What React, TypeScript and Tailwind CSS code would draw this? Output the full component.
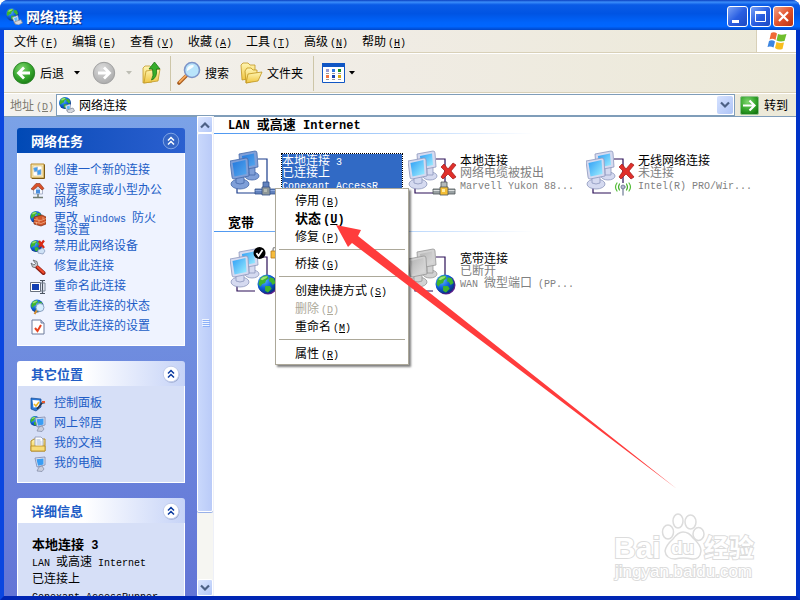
import type { ReactNode } from "react";

// ASCII runs are set in a half-width mono face beside the full-width characters
function Mix({ text, bold }: { text: string; bold?: boolean }) {
  return (
    <>
      {text.split(/([\x20-\x7e]+)/).map((part, i) =>
        i % 2 ? (
          <span
            key={i}
            className={`font-['Liberation_Mono',monospace] leading-0 whitespace-pre-wrap ${bold ? "text-[12px]" : "text-[10px]"}`}
          >
            {part}
          </span>
        ) : (
          part
        )
      )}
    </>
  );
}

function Hotkey({ text, letter, bold }: { text: string; letter: string; bold?: boolean }) {
  return (
    <>
      {text}
      <span
        className={`ml-0.5 font-['Liberation_Mono',monospace] leading-0 ${bold ? "text-[12px]" : "text-[10px]"}`}
      >
        (<u>{letter}</u>)
      </span>
    </>
  );
}

/* ---------- shared drawings ---------- */

function Defs() {
  return (
    <svg className="absolute h-0 w-0" aria-hidden="true">
      <defs>
        <radialGradient id="globe" cx="0.35" cy="0.3" r="0.8">
          <stop offset="0" stopColor="#5fb4ff" />
          <stop offset="0.5" stopColor="#0d62dc" />
          <stop offset="1" stopColor="#06256f" />
        </radialGradient>
        <linearGradient id="screen" x1="0" y1="0" x2="1" y2="1">
          <stop offset="0" stopColor="#2f9ef5" />
          <stop offset="1" stopColor="#9ff0ff" />
        </linearGradient>
        <linearGradient id="screenOn" x1="0" y1="0" x2="1" y2="1">
          <stop offset="0" stopColor="#2478dc" />
          <stop offset="1" stopColor="#55a8ee" />
        </linearGradient>
        <linearGradient id="screenOff" x1="0" y1="0" x2="1" y2="1">
          <stop offset="0" stopColor="#b4b4b4" />
          <stop offset="1" stopColor="#dedede" />
        </linearGradient>
        <linearGradient id="folder" x1="0" y1="0" x2="0" y2="1">
          <stop offset="0" stopColor="#fff6b4" />
          <stop offset="1" stopColor="#f0c540" />
        </linearGradient>
        <radialGradient id="green" cx="0.4" cy="0.3" r="0.75">
          <stop offset="0" stopColor="#7fd66f" />
          <stop offset="0.6" stopColor="#35a52c" />
          <stop offset="1" stopColor="#177a12" />
        </radialGradient>
        <radialGradient id="grey" cx="0.4" cy="0.3" r="0.75">
          <stop offset="0" stopColor="#dcdcdc" />
          <stop offset="1" stopColor="#a9a9a9" />
        </radialGradient>
      </defs>
    </svg>
  );
}

function Globe({ cx, cy, r }: { cx: number; cy: number; r: number }) {
  return (
    <g transform={`translate(${cx} ${cy}) scale(${r / 10})`}>
      <circle r="10" fill="url(#globe)" />
      <path
        d="M-8-4Q-6-9 0-9L2-6-1-4-2-1-5 0-7 3-9 0ZM3-7L7-6 9-1 6 1 4-2 2-3ZM-2 2L3 2 5 5 1 9-2 7Z"
        fill="#3fb52d"
      />
      <path d="M-7-5Q-4-9 1-8L-1-6-5-4Z" fill="#b4ec8a" opacity="0.8" />
    </g>
  );
}

type Tone = "normal" | "on" | "off";
const TONES = {
  normal: { edge: "#8d97bd", body: "#d5daf0", screen: "url(#screen)", wire: "#2b0f57" },
  on: { edge: "#4467a8", body: "#7f9fd8", screen: "url(#screenOn)", wire: "#1a3c8c" },
  off: { edge: "#969696", body: "#d2d2d2", screen: "url(#screenOff)", wire: "#2b0f57" },
};

function Computers({ tone }: { tone: Tone }) {
  const t = TONES[tone];
  return (
    <g>
      <path d="M28 10H37V34M7 37V44H25" fill="none" stroke={t.wire} strokeWidth="1.2" />
      <g stroke={t.edge} strokeWidth="0.8">
        <ellipse cx="22" cy="27" rx="7" ry="4" fill={t.body} />
        <path d="M19 18h6v8h-6z" fill={t.body} />
        <path d="M9 5L25 2Q27 2 27 4L28 18 12 21Q10 21 10 19Z" fill={t.body} />
        <path d="M12 7L24 4.500 25 16 13 18.500Z" fill={t.screen} stroke="none" />
        <ellipse cx="10" cy="35" rx="9" ry="5" fill={t.body} />
        <path d="M6 26h8v8q-4 2-8 0z" fill={t.body} />
        <path d="M0 12L16 9Q18 9 18 11L19 27 4 30Q2 30 2 28Z" fill={t.body} />
        <path d="M2.500 14L15.500 11 16.500 25 4.500 27.500Z" fill={t.screen} stroke="none" />
      </g>
    </g>
  );
}

function Plug({ tone }: { tone: Tone }) {
  const on = tone === "on";
  return (
    <g stroke={on ? "#34528c" : "#4e5658"} strokeWidth="0.8">
      <path d="M33 33h6v7h-6z" fill={on ? "#6282bd" : "#b4babb"} />
      <path d="M25 40h22v5H25z" fill={on ? "#6282bd" : "#98a0a2"} />
      <path d="M25.500 41.500h21" stroke={on ? "#9cb6e4" : "#eceeee"} />
      <path d="M32 38h8v8h-8z" fill={on ? "#8e9798" : "#f3bd35"} />
      <path d="M34 40h3v3h-3z" fill={on ? "#b6bcb4" : "#ffeb9e"} stroke="none" />
    </g>
  );
}

function Cross() {
  return (
    <path
      d="M33 18L36 15 40 20 45 14 48 16 43 22 48 28 45 30 40 25 35 30 33 28 37 22Z"
      fill="#e0302b"
      stroke="#9c1717"
      strokeWidth="0.7"
    />
  );
}

function Antenna() {
  return (
    <g fill="none" strokeLinecap="round">
      <path d="M37 39V46" stroke="#929bb0" strokeWidth="1.600" />
      <circle cx="37" cy="38" r="2" fill="#b5bbcf" stroke="#7a819e" />
      <path d="M33.500 35q-2 3 0 6M40.500 35q2 3 0 6" stroke="#48b22f" strokeWidth="1.200" />
      <path d="M31 34q-3 4 0 8M43 34q3 4 0 8" stroke="#55bd39" strokeWidth="1.200" />
    </g>
  );
}

type Kind = "lan" | "unplugged" | "wireless" | "default-dial" | "dial";

function ConnectionIcon({ kind }: { kind: Kind }) {
  const tone: Tone = kind === "lan" ? "on" : kind === "dial" ? "off" : "normal";
  return (
    <svg viewBox="0 0 50 48" className="h-12 w-[50px] shrink-0" aria-hidden="true">
      <Computers tone={tone} />
      {(kind === "lan" || kind === "unplugged") && <Plug tone={tone} />}
      {(kind === "unplugged" || kind === "wireless") && <Cross />}
      {kind === "wireless" && <Antenna />}
      {(kind === "dial" || kind === "default-dial") && (
        <>
          <circle cx="38" cy="38" r="9.500" fill="#5a1f8c" />
          <Globe cx={37} cy={37} r={9.5} />
        </>
      )}
      {kind === "default-dial" && (
        <>
          <path d="M43 6V3q0-3 3-3t3 3V6" fill="none" stroke="#9b9b9b" strokeWidth="1.500" />
          <path d="M41 4h9v7h-9z" fill="#f6bc3c" stroke="#b7791b" strokeWidth="0.8" />
          <circle cx="29.500" cy="6" r="6" fill="#000" />
          <path d="M26.500 6l2 3 4-6" fill="none" stroke="#fff" strokeWidth="1.800" />
        </>
      )}
    </svg>
  );
}

function NetworkIcon({ className = "h-4 w-4" }: { className?: string }) {
  return (
    <svg viewBox="0 0 16 16" className={className} aria-hidden="true">
      <Globe cx={6} cy={6} r={6} />
      <path d="M6 9l5-2 1 5-4 2z" fill="#e9edf8" stroke="#8d97b0" strokeWidth="0.6" />
      <path d="M7.500 9.500l3-1 .5 3-2.500 1z" fill="#5cb9f7" />
      <path d="M8 13l6-2 1.500 3-4 2-3-1z" fill="#d3d7df" stroke="#7f8794" strokeWidth="0.7" />
    </svg>
  );
}

function Flag() {
  return (
    <svg viewBox="0 0 20 18" className="h-[18px] w-5" aria-hidden="true">
      <path d="M4 1Q7-.5 10 1.500L8.500 8Q5.500 6 2.500 7.500Z" fill="#ef6a35" />
      <path d="M11 2Q14 3.500 19.500 2L17.500 9Q13 10 9.500 8.500Z" fill="#6fbe2d" />
      <path d="M2 9Q5 7.500 8 9.500L6.500 15.500Q3.500 14 .5 15Z" fill="#3c85e0" />
      <path d="M9.500 10Q13 11.500 17 10.500L15.500 17Q11 18.500 8 16Z" fill="#f8bd1d" />
    </svg>
  );
}

function Chevrons({ primary }: { primary?: boolean }) {
  return (
    <svg viewBox="0 0 18 18" className="h-[18px] w-[18px]" aria-hidden="true">
      {!primary && <circle cx="9.500" cy="9.800" r="8" fill="#9aa8cf" />}
      <circle
        cx="9"
        cy="9"
        r="7.800"
        fill={primary ? "#3566c6" : "#fff"}
        stroke={primary ? "#7fa3e4" : "#c2cdec"}
      />
      <path
        d="M6 8.500L9 5.500 12 8.500M6 12.500L9 9.500 12 12.500"
        fill="none"
        stroke={primary ? "#fff" : "#0c3ba0"}
        strokeWidth="1.500"
      />
    </svg>
  );
}

/* ---------- task icons ---------- */

const pc = (
  <>
    <path d="M5 2l10-1v8l-8 2z" fill="#dfe4f2" stroke="#7b87ac" strokeWidth="0.8" />
    <path d="M6.500 3.300l7-.8v6l-5.500 1.300z" fill="#3a9df4" />
    <path d="M9 11l3-1 2 3-2 2.500-5-.5z" fill="#c9cede" stroke="#8088a4" strokeWidth="0.7" />
  </>
);

const ICONS: Record<string, ReactNode> = {
  create: (
    <>
      <path d="M1 1h13v14H1z" fill="#f6e4ac" stroke="#b98a2c" />
      <path d="M14.500 1.500V15.500H2" fill="none" stroke="#7c5a14" />
      <path d="M3 3h9v10H3z" fill="#fff" stroke="#dfc37c" strokeWidth="0.6" />
      <path d="M3.500 5l4-1v4l-3 1zM7 7.500l4-1v5l-3.500.5z" fill="#429fee" stroke="#9eaecc" strokeWidth="0.6" />
    </>
  ),
  home: (
    <>
      <path d="M3.500 5h9v6h-9z" fill="#f5f6fb" stroke="#8f99b4" strokeWidth="0.7" />
      <path d="M1 6L6 .5h4L14 5.500 12 7 8 3 3.500 7z" fill="#d9512b" stroke="#8c3015" strokeWidth="0.6" />
      <path d="M6 6.500h4v4H6z" fill="#4a8fe0" />
      <path d="M8 11v3M3 14.500h10" stroke="#6f7b72" strokeWidth="1.500" />
    </>
  ),
  firewall: (
    <>
      <Globe cx={6} cy={6} r={6} />
      <path d="M4 6l8-2 4 2v7l-5 2-7-2z" fill="#d0562a" stroke="#7b2a10" strokeWidth="0.7" />
      <path d="M4 8.500l7 1 5-2M4 11l7 1.500 5-2M7 6.500v2M9 9v2.500M13 6v2M6.500 11v2.500" stroke="#f4b694" strokeWidth="0.7" fill="none" />
    </>
  ),
  disable: (
    <>
      <Globe cx={6} cy={7} r={6} />
      <path d="M9 2l5 7M14 1.500L9 8" stroke="#d92a14" strokeWidth="2.200" />
      <path d="M8 11l5-2 2 3-2 3-5-1z" fill="#cfe2f6" stroke="#7e92b4" strokeWidth="0.7" />
    </>
  ),
  repair: (
    <>
      <path d="M3 1l4 1.500 1 5L6.500 9l-4-1L1 4l3 2 1.500-1.500z" fill="#c5c9cc" stroke="#5e6468" strokeWidth="0.8" />
      <path d="M7.500 8.500l6 5.500" stroke="#8c1b10" strokeWidth="4" strokeLinecap="round" />
      <path d="M7.500 8l6 5.500" stroke="#ef4c2e" strokeWidth="2.200" strokeLinecap="round" />
    </>
  ),
  rename: (
    <>
      <path d="M.5 3.500h10v9H.5z" fill="#fff" stroke="#68707e" />
      <path d="M2 5h7v6H2z" fill="#123fb3" />
      <path d="M10 1.500h5M12.500 1.500v13M10 14.500h5" stroke="#4b5462" strokeWidth="1.200" />
      <path d="M11 4h4v8h-4" fill="none" stroke="#7a8493" />
    </>
  ),
  status: (
    <>
      <Globe cx={7} cy={7} r={6.5} />
      <path d="M7 11l-2.500 4" stroke="#d08a30" strokeWidth="2" />
      <circle cx="10" cy="8.500" r="4" fill="#d8efff" stroke="#8ba2c2" />
    </>
  ),
  settings: (
    <>
      <path d="M2 1h9l3 3v11H2z" fill="#fff" stroke="#6d7a9b" />
      <path d="M11 1v3h3" fill="#c6d2ec" stroke="#6d7a9b" />
      <path d="M5 9l2.500 3L11 6" fill="none" stroke="#e8441f" strokeWidth="2" />
    </>
  ),
  control: (
    <>
      <path d="M1 2l10 1v8l-5 4-5-2z" fill="#2c79d8" stroke="#154a94" strokeWidth="0.7" />
      <path d="M2.500 4l7 .5v6.500l-6 .5z" fill="#fff" />
      <path d="M4 8l2 2 3-4" fill="none" stroke="#efb51e" strokeWidth="1.500" />
      <path d="M7 13l5-6 3-.5" stroke="#2b3444" strokeWidth="1.700" fill="none" />
      <path d="M12 6h3" stroke="#e5572c" strokeWidth="2" />
    </>
  ),
  places: (
    <>
      <Globe cx={5} cy={5} r={5} />
      {pc}
    </>
  ),
  documents: (
    <>
      <path d="M1 5l3-2h11v12H1z" fill="url(#folder)" stroke="#b48a23" />
      <path d="M5 1h6l2 2v8H5z" fill="#fff" stroke="#8a96b5" strokeWidth="0.8" />
      <path d="M6.500 4h4M6.500 6h5M6.500 8h5" stroke="#8fa5cf" strokeWidth="0.8" />
      <path d="M1 10h14v5H1z" fill="#f8dc77" stroke="#b48a23" strokeWidth="0.8" />
    </>
  ),
  computer: pc,
};

type Link = { icon: string; label: string };

const TASKS: Link[] = [
  { icon: "create", label: "创建一个新的连接" },
  { icon: "home", label: "设置家庭或小型办公网络" },
  { icon: "firewall", label: "更改 Windows 防火墙设置" },
  { icon: "disable", label: "禁用此网络设备" },
  { icon: "repair", label: "修复此连接" },
  { icon: "rename", label: "重命名此连接" },
  { icon: "status", label: "查看此连接的状态" },
  { icon: "settings", label: "更改此连接的设置" },
];

const PLACES: Link[] = [
  { icon: "control", label: "控制面板" },
  { icon: "places", label: "网上邻居" },
  { icon: "documents", label: "我的文档" },
  { icon: "computer", label: "我的电脑" },
];

const MENUS = [
  ["文件", "F"],
  ["编辑", "E"],
  ["查看", "V"],
  ["收藏", "A"],
  ["工具", "T"],
  ["高级", "N"],
  ["帮助", "H"],
];

type Connection = { kind: Kind; name: string; state: string; device: string; selected?: boolean };

const GROUPS: { title: string; items: Connection[] }[] = [
  {
    title: "LAN 或高速 Internet",
    items: [
      { kind: "lan", name: "本地连接 3", state: "已连接上", device: "Conexant AccessR", selected: true },
      { kind: "unplugged", name: "本地连接", state: "网络电缆被拔出", device: "Marvell Yukon 88..." },
      { kind: "wireless", name: "无线网络连接", state: "未连接", device: "Intel(R) PRO/Wir..." },
    ],
  },
  {
    title: "宽带",
    items: [
      { kind: "default-dial", name: "", state: "", device: "" },
      { kind: "dial", name: "宽带连接", state: "已断开", device: "WAN 微型端口 (PP..." },
    ],
  },
];

type Entry = { text: string; letter: string; bold?: boolean; disabled?: boolean };

const CONTEXT: Entry[][] = [
  [
    { text: "停用", letter: "B" },
    { text: "状态", letter: "U", bold: true },
    { text: "修复", letter: "P" },
  ],
  [{ text: "桥接", letter: "G" }],
  [
    { text: "创建快捷方式", letter: "S" },
    { text: "删除", letter: "D", disabled: true },
    { text: "重命名", letter: "M" },
  ],
  [{ text: "属性", letter: "R" }],
];

/* ---------- window chrome ---------- */

function TitleBar() {
  const button =
    "flex h-[21px] w-[21px] items-center justify-center rounded-[3px] border border-white";
  return (
    <header className="flex h-[30px] shrink-0 items-center bg-[linear-gradient(180deg,#0a3fc0_0%,#3b8dfa_7%,#0a5be6_16%,#0054e3_45%,#0064fb_75%,#0066ff_88%,#0046c8_100%)] pt-0.5 pr-1.5 pl-1.5">
      <NetworkIcon className="h-[17px] w-[17px]" />
      <h1 className="ml-[3px] flex-1 text-[14px] leading-4 font-bold text-white [text-shadow:1px_1px_1px_#0a2a80]">
        网络连接
      </h1>
      <div className="flex gap-0.5">
        <button aria-label="最小化" className={`${button} bg-linear-to-br from-[#7ba1f5] via-[#2a5fe2] to-[#1c48c2]`}>
          <svg viewBox="0 0 19 19" className="h-[19px] w-[19px]">
            <path d="M4 13h7v3H4z" fill="#fff" />
          </svg>
        </button>
        <button aria-label="最大化" className={`${button} bg-linear-to-br from-[#7ba1f5] via-[#2a5fe2] to-[#1c48c2]`}>
          <svg viewBox="0 0 19 19" className="h-[19px] w-[19px]">
            <path d="M4.500 5v9.500h10V5" fill="none" stroke="#fff" />
            <path d="M4 4h11v3H4z" fill="#fff" />
          </svg>
        </button>
        <button aria-label="关闭" className={`${button} bg-linear-to-br from-[#f0a084] via-[#e2522b] to-[#b83212]`}>
          <svg viewBox="0 0 19 19" className="h-[19px] w-[19px]">
            <path d="M5 5l9 9M14 5l-9 9" stroke="#fff" strokeWidth="2.200" />
          </svg>
        </button>
      </div>
    </header>
  );
}

function MenuBar() {
  return (
    <div className="flex h-[23px] shrink-0 border-b border-[#d8d0b8]">
      <nav className="flex flex-1 items-center pl-0.5">
        {MENUS.map(([text, letter]) => (
          <button key={letter} className="w-[58px] px-2 text-left leading-4 whitespace-nowrap">
            <Hotkey text={text} letter={letter} />
          </button>
        ))}
      </nav>
      <div className="flex w-10 items-center justify-center border-l border-[#d8d0b8] bg-white">
        <Flag />
      </div>
    </div>
  );
}

function Caret({ faded }: { faded?: boolean }) {
  return (
    <svg viewBox="0 0 6 4" className="h-1 w-1.5">
      <path d="M0 0h6L3 3.500z" fill={faded ? "#bdbdb4" : "#000"} />
    </svg>
  );
}

function Toolbar() {
  return (
    <div className="flex h-10 shrink-0 items-center border-t border-b border-t-white border-b-[#d8d0b8] pl-2">
      <button className="flex items-center gap-1">
        <svg viewBox="0 0 24 24" className="h-6 w-6">
          <circle cx="12" cy="12" r="10.700" fill="url(#green)" stroke="#2c8428" />
          <path d="M18 12H8M12 6.500L6.500 12 12 17.500" fill="none" stroke="#fff" strokeWidth="2.800" />
        </svg>
        后退
      </button>
      <button aria-label="后退历史" className="ml-2.5">
        <Caret />
      </button>
      <button aria-label="前进" className="ml-3">
        <svg viewBox="0 0 24 24" className="h-6 w-6">
          <circle cx="12" cy="12" r="10.700" fill="url(#grey)" stroke="#a0a0a0" />
          <path d="M6 12H16M12 6.500L17.500 12 12 17.500" fill="none" stroke="#fff" strokeWidth="2.800" />
        </svg>
      </button>
      <button aria-label="前进历史" className="ml-2.5">
        <Caret faded />
      </button>
      <button aria-label="向上" className="ml-2.5">
        <svg viewBox="0 0 20 24" className="h-6 w-5">
          <path d="M1 7l2-2h5l2 2v14l-9 1z" fill="url(#folder)" stroke="#c29b2b" strokeWidth="0.8" />
          <path d="M4 10l14-2-2 12-14 2z" fill="url(#folder)" stroke="#c29b2b" strokeWidth="0.8" />
          <path d="M12.500 1L18 8h-3.500q1 9-5 11 2.500-4 1-11H7z" fill="#37ad2b" stroke="#1d7717" strokeWidth="0.8" />
        </svg>
      </button>
      <span className="ml-2 h-[35px] w-px bg-[#cdc6a8]" />
      <button className="ml-1.5 flex items-center gap-1">
        <svg viewBox="0 0 24 24" className="h-6 w-6">
          <path d="M2 22l8-8" stroke="#a75a1b" strokeWidth="3.600" strokeLinecap="round" />
          <path d="M2.500 21l7-7" stroke="#f5a95c" strokeWidth="1.800" strokeLinecap="round" />
          <circle cx="15" cy="9" r="7.500" fill="#b9e4fb" stroke="#7d95c9" strokeWidth="1.600" />
          <path d="M10 8q1-4 6-4 2 1-1 3t-5 3z" fill="#fff" opacity="0.9" />
        </svg>
        搜索
      </button>
      <button className="ml-2.5 flex items-center gap-1">
        <svg viewBox="0 0 24 22" className="h-[22px] w-6">
          <path d="M2 3l2-2h5l2 2h5v11l-2 2-11 2z" fill="url(#folder)" stroke="#c09520" strokeWidth="0.8" />
          <path d="M6 9l2-3h4l2 2h4v10l-11 3z" fill="url(#folder)" stroke="#c09520" strokeWidth="0.8" />
          <path d="M9 12l14-2-4 9-12 2z" fill="url(#folder)" stroke="#c09520" strokeWidth="0.8" />
        </svg>
        文件夹
      </button>
      <span className="ml-2.5 h-[35px] w-px bg-[#cdc6a8]" />
      <button aria-label="查看" className="ml-2 flex items-center gap-1">
        <svg viewBox="0 0 23 20" className="h-5 w-[23px]">
          <path d="M.5.500h22v19H.5z" fill="#fff" stroke="#1056c4" />
          <path d="M0 0h23v4H0z" fill="#1056c4" />
          <path d="M4 6h3v3H4z" fill="#9b9bd2" />
          <path d="M10 6h3v3h-3z" fill="#2d78e2" />
          <path d="M16 6h3v3h-3z" fill="#189029" />
          <path d="M4 12h3v3H4z" fill="#f27542" />
          <path d="M10 12h3v3h-3z" fill="#1642ae" />
          <path d="M16 12h3v3h-3z" fill="#d9a80a" />
          <path d="M4 10.500h3M10 10.500h3M16 10.500h3M4 16.500h3M10 16.500h3M16 16.500h3" stroke="#9a9a9a" />
        </svg>
        <Caret />
      </button>
    </div>
  );
}

function AddressBar() {
  return (
    <form className="flex h-[23px] shrink-0 items-center border-t border-white" onSubmit={(e) => e.preventDefault()}>
      <label htmlFor="address" className="w-[52px] pl-1.5 whitespace-nowrap text-[#7d7b70]">
        <Hotkey text="地址" letter="D" />
      </label>
      <div className="flex h-[22px] flex-1 items-center border border-[#7f9db9] bg-white pr-px pl-0.5">
        <NetworkIcon className="h-4 w-4" />
        <input id="address" defaultValue="网络连接" className="ml-1 min-w-0 flex-1 outline-none" />
        <button
          type="button"
          aria-label="地址列表"
          className="flex h-[18px] w-4 items-center justify-center rounded-xs bg-linear-to-br from-[#d6e2ff] to-[#aec4f6]"
        >
          <svg viewBox="0 0 10 8" className="h-2 w-2.5">
            <path d="M1 1.500l4 4 4-4" fill="none" stroke="#4d6185" strokeWidth="2.200" />
          </svg>
        </button>
      </div>
      <button className="ml-[5px] flex w-[56px] items-center gap-[5px] whitespace-nowrap">
        <svg viewBox="0 0 19 19" className="h-[19px] w-[19px]">
          <rect x="0.500" y="0.500" width="18" height="18" rx="1.500" fill="url(#green)" stroke="#8fc28d" />
          <path d="M3 9.500h11M9.500 4.500l5 5-5 5" fill="none" stroke="#fff" strokeWidth="2.200" />
        </svg>
        转到
      </button>
    </form>
  );
}

/* ---------- sidebar ---------- */

function Panel({ title, primary, children }: { title: string; primary?: boolean; children: ReactNode }) {
  return (
    <section className="shrink-0">
      <h2
        className={`flex h-[25px] items-center justify-between rounded-t-[3px] pr-[5px] pl-3.5 text-[13px] font-bold ${
          primary
            ? "bg-linear-to-r from-[#0049b5] to-[#2b60d0] text-white"
            : "bg-linear-to-r from-white from-40% to-[#c6d3f7] text-[#215dc6]"
        }`}
      >
        {title}
        <button aria-label={`收起${title}`}>
          <Chevrons primary={primary} />
        </button>
      </h2>
      <div className={`border border-t-0 border-white ${primary ? "bg-[#eff3ff]" : "bg-[#d6dff7]"}`}>
        {children}
      </div>
    </section>
  );
}

function LinkList({ links }: { links: Link[] }) {
  return (
    <ul className="pt-1.5 pr-5 pb-2.5 pl-3">
      {links.map((link) => (
        <li key={link.label}>
          <a href="#" className="flex min-h-5 gap-2 pt-1 leading-3 text-[#215dc6]">
            <svg viewBox="0 0 16 16" className="h-4 w-4 shrink-0" aria-hidden="true">
              {ICONS[link.icon]}
            </svg>
            <span>
              <Mix text={link.label} />
            </span>
          </a>
        </li>
      ))}
    </ul>
  );
}

function Sidebar() {
  return (
    <aside className="flex w-[193px] shrink-0 flex-col gap-[15px] overflow-hidden border-t border-[#7f9db9] bg-linear-to-b from-[#7ba2e7] to-[#6375d6] pt-[11px] pr-3 pl-[13px]">
      <Panel title="网络任务" primary>
        <LinkList links={TASKS} />
      </Panel>
      <Panel title="其它位置">
        <LinkList links={PLACES} />
      </Panel>
      <Panel title="详细信息">
        <div className="px-3.5 pt-3 pb-4 leading-[17px] whitespace-nowrap">
          <p className="text-[13px] font-bold">
            <Mix text="本地连接 3" bold />
          </p>
          <p>
            <Mix text="LAN 或高速 Internet" />
          </p>
          <p>已连接上</p>
          <p>
            <Mix text="Conexant AccessRunner" />
          </p>
        </div>
      </Panel>
    </aside>
  );
}

function Scrollbar() {
  const arrow =
    "flex h-[17px] w-full shrink-0 items-center justify-center rounded-xs border border-white bg-linear-to-br from-[#dce6ff] to-[#b4c8f8]";
  return (
    <div className="flex w-[17px] shrink-0 flex-col border-r border-[#eef0f8] bg-[#f6f6f2]">
      <button aria-label="向上滚动" className={arrow}>
        <svg viewBox="0 0 10 8" className="h-2 w-2.5">
          <path d="M1 6.500l4-4 4 4" fill="none" stroke="#4d6185" strokeWidth="2.200" />
        </svg>
      </button>
      <div className="flex min-h-0 flex-1 flex-col">
        <div className="flex h-[85%] flex-col items-center justify-center gap-px rounded-xs border border-white bg-linear-to-r from-[#c9d8fc] to-[#bacbf8] shadow-[0_1px_0_#98b0e8]">
          {[0, 1, 2, 3].map((i) => (
            <i key={i} className="h-px w-[7px] bg-[#eef4fe] shadow-[1px_1px_0_#8cb0f8]" />
          ))}
        </div>
      </div>
      <button aria-label="向下滚动" className={arrow}>
        <svg viewBox="0 0 10 8" className="h-2 w-2.5">
          <path d="M1 1.500l4 4 4-4" fill="none" stroke="#4d6185" strokeWidth="2.200" />
        </svg>
      </button>
    </div>
  );
}

/* ---------- connections ---------- */

function ConnectionItem({ item }: { item: Connection }) {
  const grey = item.selected ? "" : "text-[#808080]";
  return (
    <button className="flex w-[178px] items-start gap-0.5 text-left leading-3 whitespace-nowrap">
      <ConnectionIcon kind={item.kind} />
      <span
        className={`mt-[5px] flex h-9 flex-col ${
          item.selected ? "w-[120px] bg-[#316ac5] text-white outline-1 outline-dotted outline-black" : ""
        }`}
      >
        <span>
          <Mix text={item.name} />
        </span>
        <span className={grey}>
          <Mix text={item.state} />
        </span>
        <span className={grey}>
          <Mix text={item.device} />
        </span>
      </span>
    </button>
  );
}

function Connections() {
  return (
    <main className="min-w-0 flex-1 overflow-hidden border-t border-[#7f9db9] bg-white">
      {GROUPS.map((group) => (
        <section key={group.title} className="h-[98px]">
          <h2 className="h-4 pl-3.5 text-[13px] leading-[14px] font-bold">
            <Mix text={group.title} bold />
          </h2>
          <div className="h-px w-[320px] bg-linear-to-r from-[#4a96f0] to-white" />
          <div className="flex pt-[15px] pl-4">
            {group.items.map((item) => (
              <ConnectionItem key={item.kind} item={item} />
            ))}
          </div>
        </section>
      ))}
    </main>
  );
}

function ContextMenu() {
  return (
    <div
      role="menu"
      className="absolute top-[188px] left-[275px] w-[134px] border border-[#aca899] bg-white py-0.5 shadow-[2px_2px_2px_#00000080]"
    >
      {CONTEXT.map((entries, i) => (
        <div key={i}>
          {i > 0 && <hr className="mx-[3px] my-1 border-[#aca899]" />}
          {entries.map((entry) => (
            <button
              key={entry.letter}
              role="menuitem"
              disabled={entry.disabled}
              className={`block h-[18px] w-full pl-[19px] text-left leading-4 whitespace-nowrap ${
                entry.bold ? "text-[13px] font-bold" : ""
              } ${entry.disabled ? "text-[#aca899]" : ""}`}
            >
              <Hotkey text={entry.text} letter={entry.letter} bold={entry.bold} />
            </button>
          ))}
        </div>
      ))}
    </div>
  );
}

function Arrow() {
  return (
    <svg viewBox="0 0 345 268" className="pointer-events-none absolute top-[223px] left-[334px] h-[268px] w-[345px]" aria-hidden="true">
      <path d="M2 2L27 7 24 13 343 266 18 20 14 24Z" fill="#ff3c3c" />
    </svg>
  );
}

function Watermark() {
  return (
    <svg viewBox="0 0 150 76" className="pointer-events-none absolute right-[40px] bottom-[12px] h-[76px] w-[150px]" aria-hidden="true">
      <g fill="#fff" stroke="#dcdcdc" strokeWidth="1.500">
        <ellipse cx="58" cy="20" rx="5.500" ry="7" />
        <ellipse cx="68" cy="9" rx="5" ry="7" />
        <ellipse cx="80.500" cy="10" rx="5.500" ry="7" />
        <ellipse cx="88.500" cy="22" rx="5.500" ry="6.500" />
        <path d="M73 20Q79 20 83 26 91 33 91 39 90 48 82 47 73 45 65 47 56 47 55 39 56 33 63 27 68 20 73 20Z" />
      </g>
      <g
        fill="#fff"
        stroke="#dcdcdc"
        strokeWidth="2"
        paintOrder="stroke"
        className="font-['Liberation_Sans','Noto_Sans_CJK_SC',sans-serif] font-bold"
      >
        <text x="4" y="46" fontSize="30">Bai</text>
        <text x="61" y="42" fontSize="19">du</text>
        <text x="94" y="45" fontSize="25">经验</text>
      </g>
      <text
        x="5"
        y="65"
        fontSize="17"
        fill="#fff"
        stroke="#dcdcdc"
        strokeWidth="2"
        paintOrder="stroke"
        className="font-['Liberation_Sans',sans-serif]"
      >
        jingyan.baidu.com
      </text>
    </svg>
  );
}

export default function App() {
  return (
    <div className="relative flex h-screen flex-col overflow-hidden rounded-t-lg bg-[#0a46e0] font-['Noto_Sans_CJK_SC',sans-serif] text-[12px] text-black">
      <Defs />
      <TitleBar />
      <div className="flex min-h-0 flex-1 flex-col border-x-4 border-b-4 border-[#0a46e0] border-r-[#0033c8] border-b-[#0026b4] bg-linear-to-r from-[#f3f2ee] via-[#f0ece4] to-[#ece9d8]">
        <MenuBar />
        <Toolbar />
        <AddressBar />
        <div className="flex min-h-0 flex-1">
          <Sidebar />
          <Scrollbar />
          <Connections />
        </div>
      </div>
      <ContextMenu />
      <Arrow />
      <Watermark />
    </div>
  );
}
